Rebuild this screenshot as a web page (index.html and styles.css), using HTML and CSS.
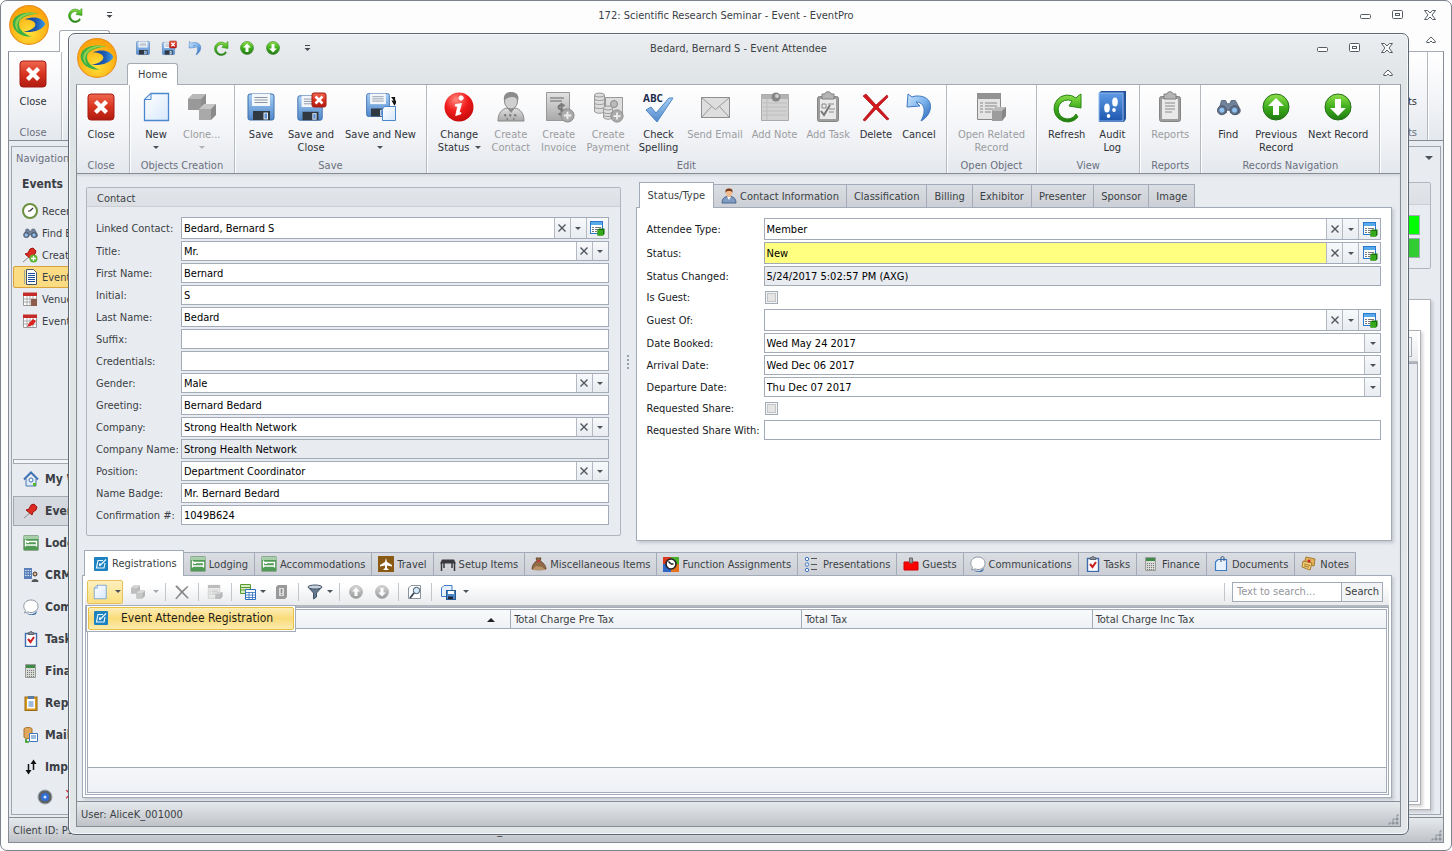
FILE: index.html
```html
<!DOCTYPE html>
<html lang="en">
<head>
<meta charset="utf-8">
<title>Bedard, Bernard S - Event Attendee</title>
<link rel="stylesheet" href="styles.css">
</head>
<body>
<svg class="defs" aria-hidden="true">
<defs>
<linearGradient id="gRed" x1="0" y1="0" x2="0" y2="1"><stop offset="0" stop-color="#f0664e"/><stop offset=".5" stop-color="#d8341f"/><stop offset="1" stop-color="#b01a10"/></linearGradient>
<linearGradient id="gBlue" x1="0" y1="0" x2="0" y2="1"><stop offset="0" stop-color="#a9d0f5"/><stop offset="1" stop-color="#4f87c9"/></linearGradient>
<linearGradient id="gUndo" x1="0" y1="0" x2="1" y2="1"><stop offset="0" stop-color="#cfe6fc"/><stop offset=".5" stop-color="#7db4ec"/><stop offset="1" stop-color="#2563b4"/></linearGradient>
<linearGradient id="gBook" x1="0" y1="0" x2="0" y2="1"><stop offset="0" stop-color="#5f9be6"/><stop offset="1" stop-color="#1d57ae"/></linearGradient>
<linearGradient id="gGreen" x1="0" y1="0" x2="0" y2="1"><stop offset="0" stop-color="#8fe04a"/><stop offset=".5" stop-color="#3fae1c"/><stop offset="1" stop-color="#1f7a12"/></linearGradient>
<linearGradient id="gPage" x1="0" y1="0" x2="1" y2="1"><stop offset="0" stop-color="#ffffff"/><stop offset="1" stop-color="#d7e8fb"/></linearGradient>
<linearGradient id="gGray" x1="0" y1="0" x2="0" y2="1"><stop offset="0" stop-color="#e2e2e2"/><stop offset="1" stop-color="#a8a8a8"/></linearGradient>
<linearGradient id="gSwoosh" x1="0" y1="0" x2="1" y2="0"><stop offset="0" stop-color="#173f8c"/><stop offset=".6" stop-color="#1f5cb4"/><stop offset="1" stop-color="#3d9be6"/></linearGradient>
<radialGradient id="gLogo" cx=".5" cy=".7" r=".6"><stop offset="0" stop-color="#ffe23a"/><stop offset="1" stop-color="#fca50c"/></radialGradient>
<radialGradient id="gInfo" cx=".4" cy=".25" r=".8"><stop offset="0" stop-color="#ff8a80"/><stop offset=".5" stop-color="#f01c1c"/><stop offset="1" stop-color="#c00808"/></radialGradient>
<symbol id="logo" viewBox="0 0 38 38"><circle cx="19" cy="19" r="18.400" fill="url(#gLogo)" stroke="#e98f1b"/><path d="M28 8C14 5 3 10 3.500 18c.5 7 8 12.500 18 12C13 27 9.500 23 9.500 18c0-6 8-9 18.500-10z" fill="#3cb043"/><path d="M10 11c-5 4-6 10 0 15-3-5-3-10 2-14 4-3 9-3.500 16-4-8-1.500-14-.5-18 3z" fill="#8fd04c"/><path d="M15 13.500c9-3.500 17-1.500 19.500 4.500-3 6-12 8.500-20.500 7.500 7-1.500 11-4 11-7s-4-4.500-10-5z" fill="url(#gSwoosh)"/></symbol>
<symbol id="close" viewBox="0 0 32 32"><rect x="3" y="3" width="26" height="26" rx="3" fill="url(#gRed)" stroke="#a41c12"/><path d="M9 12l3-3 4 4 4-4 3 3-4 4 4 4-3 3-4-4-4 4-3-3 4-4z" fill="#fff"/></symbol>
<symbol id="page" viewBox="0 0 32 32"><path d="M11 2.500H28.500V29.500H4.500V8.500z" fill="url(#gPage)" stroke="#4a87cf" stroke-width="1.300"/><path d="M4.500 8.500H11V2.500z" fill="#e6f1fd" stroke="#4a87cf"/></symbol>
<symbol id="cubes" viewBox="0 0 32 32"><path d="M2 8l5-5h13v11l-5 5H2z" fill="#8e8e8e"/><path d="M2 8l5-5h13l-5 5z" fill="#b9b9b9"/><path d="M2 8h13v11H2z" fill="#999"/><path d="M13 18l5-5h12v11l-5 5H13z" fill="#8a8a8a"/><path d="M13 18l5-5h12l-5 5z" fill="#c6c6c6"/><path d="M13 18h12v11H13z" fill="#a9a9a9"/></symbol>
<symbol id="floppy" viewBox="0 0 32 32"><rect x="3" y="3" width="26" height="26" rx="2" fill="url(#gBlue)" stroke="#3c6eab"/><path d="M7 3h18v12H7z" fill="#f4f7fa"/><path d="M9.500 6.500h13M9.500 9h13M9.500 11.500h13" stroke="#8b97a5"/><path d="M8 20h17v9H8z" fill="#303841"/><rect x="19" y="22" width="3.500" height="6" fill="#5d91d3" stroke="#dbe7f3"/></symbol>
<symbol id="floppyx" viewBox="0 0 32 32"><use href="#floppy" x="0" y="2" width="30" height="30"/><rect x="17" y="2" width="14" height="14" rx="2" fill="url(#gRed)" stroke="#a41c12"/><path d="M20.500 5.500l7 7m0-7l-7 7" stroke="#fff" stroke-width="2.600"/></symbol>
<symbol id="floppyn" viewBox="0 0 32 32"><use href="#floppy" x="0" y="0" width="28" height="28"/><path d="M20.500 15.500h11v14h-13v-11.500z" fill="url(#gPage)" stroke="#4a87cf"/><path d="M27.500 6.500h3v4M28.500 10h4l-2 3.500z" stroke="#111" stroke-width="1.200" fill="#111"/></symbol>
<symbol id="info" viewBox="0 0 32 32"><circle cx="16" cy="16" r="14.500" fill="url(#gInfo)"/><path d="M16 6.500a2.200 2.200 0 1 1 3 2.500 2.200 2.200 0 0 1-3-2.500zM12.500 13.500l6-1-2.500 9.500 2-.5-.3 1.500-5 1.500 2-9-2.500-.5z" fill="#fff" stroke="#fff" stroke-width=".8"/></symbol>
<symbol id="person" viewBox="0 0 32 32"><path d="M3 30c0-8 4-12 9-13h8c5 1 9 5 9 13z" fill="url(#gGray)" stroke="#888"/><path d="M12 17l4 5 4-5z" fill="#8b8b8b"/><ellipse cx="16" cy="10" rx="6.500" ry="8" fill="#d0d0d0" stroke="#888"/><path d="M9 10C8 3 12 1 16 1s9 2 7 9c-1-3-3-4-6-4s-6 1-8 4z" fill="#8c8c8c"/><path d="M9 24h1.500v1.500M14 24h1.500v1.500M19 24h1.500v1.500M11.500 28h1.500M18 28h1.500" stroke="#777" stroke-width="1.500" fill="none"/></symbol>
<symbol id="plusg" viewBox="0 0 16 16"><circle cx="8" cy="8" r="7" fill="#aaa" stroke="#888"/><path d="M8 4v8M4 8h8" stroke="#eee" stroke-width="2"/></symbol>
<symbol id="invoice" viewBox="0 0 32 32"><path d="M3.500 1.500h23v28h-23z" fill="url(#gGray)" stroke="#999"/><path d="M7 7h14M7 10h12" stroke="#8a8a8a" stroke-width="1.500"/><path d="M21.500 15c-2-2-6-1-6 1.500s6 2 6 4.500-4 3.500-6 1.500M18.500 12v13" stroke="#777" stroke-width="2" fill="none"/><use href="#plusg" x="17" y="17" width="15" height="15"/></symbol>
<symbol id="payment" viewBox="0 0 32 32"><rect x="13.500" y="6.500" width="17" height="15" fill="#ddd" stroke="#999"/><circle cx="22" cy="13" r="3.500" fill="#bbb" stroke="#888"/><g fill="#ddd" stroke="#999"><path d="M2.500 4v16c0 3 10 3 10 0V4z"/><path d="M2.500 8c0 2 10 2 10 0M2.500 12c0 2 10 2 10 0M2.500 16c0 2 10 2 10 0" fill="none"/><ellipse cx="7.500" cy="4" rx="5" ry="2"/><path d="M11.500 17v9c0 3 9 3 9 0v-9z"/><path d="M11.500 21c0 2 9 2 9 0M11.500 24c0 2 9 2 9 0" fill="none"/><ellipse cx="16" cy="17" rx="4.500" ry="2"/></g><use href="#plusg" x="18" y="18" width="14" height="14"/></symbol>
<symbol id="spell" viewBox="0 0 32 32"><text x="1" y="11" font-family="Open Sans" font-weight="700" font-size="10" fill="#1a2a4a">ABC</text><path d="M4 19l5-3 5 6L27 7h4L15 31z" fill="url(#gBlue)" stroke="#4d86c6"/></symbol>
<symbol id="mail" viewBox="0 0 32 32"><rect x="2.500" y="6.500" width="28" height="20" fill="#dedede" stroke="#8e8e8e"/><path d="M2.500 6.500l14 12 14-12M2.500 26.500l10-11M30.500 26.500l-10-11" fill="none" stroke="#999"/></symbol>
<symbol id="note" viewBox="0 0 32 32"><path d="M2.500 3.500h27v26h-27z" fill="#d2d2d2" stroke="#aaa"/><path d="M2.500 4h27v4h-27z" fill="#b3b3b3"/><path d="M4 12h24M4 16h24M4 20h24M4 24h24M8 8v21" stroke="#bdbdbd"/><circle cx="17" cy="6" r="4.500" fill="#858585"/><circle cx="18" cy="5" r="2" fill="#ccc"/></symbol>
<symbol id="clip" viewBox="0 0 32 32"><rect x="5.500" y="5.500" width="21" height="25" rx="2" fill="#9d9d9d" stroke="#858585"/><path d="M8 8h16v20H8z" fill="#e9e9e9"/><path d="M10 3h3c0-3 6-3 6 0h3v5H10z" fill="#b5b5b5" stroke="#808080"/></symbol>
<symbol id="report" viewBox="0 0 32 32"><use href="#clip"/><path d="M11 12h10M11 15h10M11 18h10M11 21h7" stroke="#8a8a8a"/></symbol>
<symbol id="task" viewBox="0 0 32 32"><use href="#clip"/><path d="M10 13h4v4h-4zM16 13h6M17 18h6M17 21h5" stroke="#8a8a8a" fill="none"/><path d="M9 20l3 4 6-10" stroke="#777" stroke-width="2" fill="none"/></symbol>
<symbol id="del" viewBox="0 0 32 32"><path d="M3 5l3-2 10 11L27 4l1 2-10 10 11 12-2 1-11-11L5 30l-2-1 11-13z" fill="#d3171e" stroke="#a80f14" stroke-width=".7"/></symbol>
<symbol id="undo" viewBox="0 0 32 32"><path d="M5 3L4 16l13-1-4-4c8 0 11 8 5 19 13-7 14-26-5-25-1 0-3 .500-4 1z" fill="url(#gUndo)" stroke="#3f79c2"/></symbol>
<symbol id="related" viewBox="0 0 32 32"><path d="M2.500 2.500h23v26h-23z" fill="#e4e4e4" stroke="#888"/><path d="M2 2h24v6H2z" fill="#929292"/><path d="M5 12h3M5 15h3M5 18h3M5 21h3M10 12h12M10 15h12M10 18h8M10 21h6" stroke="#888"/><path d="M17 20l4-4h10v9l-4 5H17z" fill="#868686"/><path d="M17 20l4-4h10l-4 4z" fill="#bbb"/><path d="M17 20h10v10H17z" fill="#9c9c9c"/></symbol>
<symbol id="refresh" viewBox="0 0 32 32"><path d="M25 7A13.500 13.500 0 1 0 27 26l-2-3A9.500 9.500 0 1 1 21 10l-3 5 12 2V3l-3 2z" fill="url(#gGreen)" stroke="#2c8716"/></symbol>
<symbol id="book" viewBox="0 0 32 32"><path d="M3 2l2-2h25v28l-2 3H3z" fill="#26549c"/><rect x="3" y="2" width="24" height="28" fill="url(#gBook)" stroke="#8fb7ec"/><ellipse cx="19" cy="11" rx="2.800" ry="4.500" fill="#fff"/><ellipse cx="11" cy="17" rx="2.800" ry="4.500" fill="#fff"/><ellipse cx="18" cy="19" rx="1.800" ry="2" fill="#fff"/><ellipse cx="12.500" cy="25" rx="1.800" ry="2" fill="#fff"/></symbol>
<symbol id="binoc" viewBox="0 0 32 32"><path d="M8 8h5l2 4h3l2-4h5l6 11a5 5 0 0 1-9 4h-3v-3h-5v3a6 6 0 0 1-9-4z" fill="#72829a" stroke="#4c5a70"/><circle cx="8.500" cy="20" r="5.500" fill="#64748d" stroke="#3f4c60"/><circle cx="24" cy="20" r="5.500" fill="#64748d" stroke="#3f4c60"/><circle cx="8.500" cy="20" r="3" fill="#8fc3f2"/><circle cx="24" cy="20" r="3" fill="#8fc3f2"/></symbol>
<symbol id="up" viewBox="0 0 32 32"><circle cx="16" cy="16" r="13" fill="url(#gGreen)" stroke="#27701a"/><path d="M16 7l8 8h-5v9h-6v-9H8z" fill="#fff"/></symbol>
<symbol id="down" viewBox="0 0 32 32"><circle cx="16" cy="16" r="13" fill="url(#gGreen)" stroke="#27701a"/><path d="M16 25l8-8h-5V8h-6v9H8z" fill="#fff"/></symbol>
<symbol id="min" viewBox="0 0 12 12"><rect x=".5" y="5.500" width="10" height="4" rx="1" fill="#fff" stroke="#555c64"/></symbol>
<symbol id="max" viewBox="0 0 12 12"><rect x=".5" y="1.500" width="10" height="8" rx="1" fill="#fff" stroke="#555c64"/><rect x="3.500" y="4.500" width="4" height="2" fill="#fff" stroke="#555c64"/></symbol>
<symbol id="x" viewBox="0 0 12 12"><path d="M.5 1.500h3l2.500 2.500 2.500-2.500h3L8 6l3.500 4.500h-3L6 8l-2.500 2.500h-3L4 6z" fill="#fff" stroke="#555c64"/></symbol>
<symbol id="collapse" viewBox="0 0 10 8"><path d="M.8 5L5 1l4.200 4v1.500H6.500L5 5 3.500 6.500H.8z" fill="#fff" stroke="#555c64"/></symbol>
<symbol id="more" viewBox="0 0 7 6"><path d="M1 .5h5" stroke="#444a50"/><path d="M.5 3h6l-3 3z" fill="#444a50"/></symbol>
<symbol id="clear" viewBox="0 0 10 10"><path d="M1.500 1.500l7 7m0-7l-7 7" stroke="#50565e" stroke-width="1.400"/></symbol>
<symbol id="open" viewBox="0 0 16 16"><rect x="1.500" y="1.500" width="12" height="12" fill="#fff" stroke="#2a7bd0"/><path d="M2 2h11v3H2z" fill="#58a9ea"/><path d="M3 7.500h2M3 9.500h2M3 11.500h2M6 7.500h6M6 9.500h3M6 11.500h2" stroke="#777"/><path d="M8.500 10L10 8.500h5.500V14L14 15.500H8.500z" fill="#17700b"/><path d="M8.500 10H14v5.500H8.500z" fill="#36a81c"/></symbol>
<symbol id="reg" viewBox="0 0 16 16"><rect x="1" y="1" width="14" height="14" rx="1" fill="#1d82c0"/><path d="M10 4.500H5L3.500 12H11l1-5M6.500 10L13 3.500M6.500 10l.500-3" stroke="#e9f6ff" stroke-width="1.200" fill="none"/></symbol>
<symbol id="bed" viewBox="0 0 16 16"><rect x=".5" y=".5" width="15" height="15" rx="1" fill="#4f9a55" stroke="#8fa894"/><path d="M.5 1h15v3H.5z" fill="#a7cfa9"/><path d="M2.500 4.500v7M2.500 10h11v1.500M13.500 10V6.500H2.500" stroke="#fff" stroke-width="1.300" fill="none"/><path d="M4 7.500h2" stroke="#fff"/></symbol>
<symbol id="plane" viewBox="0 0 16 16"><rect width="16" height="16" fill="#8a5a14"/><path d="M8 2l1 4 5 3v1.500L9 9.500V12l2 2H5l2-2V9.500L2 10.500V9l5-3z" fill="#fff"/></symbol>
<symbol id="table" viewBox="0 0 16 16"><path d="M2 3.500h12l2 4H0z" fill="#3a3a3e"/><path d="M1.500 7v8M14.500 7v8M4 7v5M12 7v5" stroke="#3a3a3e" stroke-width="1.500"/></symbol>
<symbol id="bag" viewBox="0 0 16 16"><path d="M6 5L5 2h5L9 5c3 1 6 5 6 8 0 1-14 1-14 0 0-3 2-7 5-8z" fill="#8f6b47" stroke="#6c4e30"/><path d="M1 14l4-4 6 1 4 3z" fill="#b99468"/><path d="M6 5h3" stroke="#c33" stroke-width="1.500"/></symbol>
<symbol id="func" viewBox="0 0 16 16"><path d="M0 1h8v7H0z" fill="#d93a1e"/><path d="M8 1h8v7H8z" fill="#4caf2a"/><path d="M0 8h8v8H0z" fill="#2c67c8"/><path d="M8 8h8v8H8z" fill="#e8721c"/><circle cx="8" cy="8" r="5" fill="#fff" stroke="#222" stroke-width="1.600"/><path d="M8 8L5.500 5.500M8 8h2.500" stroke="#222" stroke-width="1.500"/></symbol>
<symbol id="list" viewBox="0 0 16 16"><g fill="#fff" stroke="#3c76bf"><circle cx="3" cy="3" r="1.700"/><circle cx="3" cy="8.500" r="1.700"/><circle cx="3" cy="14" r="1.700"/></g><path d="M7 2.500h6M7 8.500h6M7 13.500h6" stroke="#555"/></symbol>
<symbol id="guest" viewBox="0 0 16 16"><path d="M1 6h14v8H1z" fill="#f00" stroke="#c00"/><path d="M6.500 7V2h3v5z" fill="#999" stroke="#666"/></symbol>
<symbol id="bubble" viewBox="0 0 16 16"><path d="M3 14c3 2 10 2 12-4l-2 5c-3 2-8 1-10-1z" fill="#3a6ea8"/><path d="M8 1c4 0 7 2.500 7 6.200S12 13.500 8 13.500c-1 0-2-.2-3-.6L1.500 14l1-2.700C1.200 10 .8 8.600.8 7.200.8 3.500 4 1 8 1z" fill="#fff" stroke="#8d97a3"/></symbol>
<symbol id="tasks" viewBox="0 0 16 16"><rect x="2.500" y="2.500" width="11" height="13" fill="#fff" stroke="#3e6cab" stroke-width="1.400"/><path d="M5 3.500V1.800h1.500C7 0 9 0 9.500 1.800H11v1.700z" fill="#8a9099" stroke="#5d646e"/><path d="M5 8l2.500 3L11 6" stroke="#cc1f1f" stroke-width="2" fill="none"/></symbol>
<symbol id="calc" viewBox="0 0 16 16"><path d="M2.500 1.500h10v13h-10z" fill="#d8dad6" stroke="#9a9c98"/><path d="M3 2h9v3H3z" fill="#3f8a48"/><path d="M4 7.500h8M4 9.500h8M4 11.500h8M4 13.500h8" stroke="#777" stroke-dasharray="1 1"/></symbol>
<symbol id="doc" viewBox="0 0 16 16"><path d="M5 3.500h8.500v11h-11V6z" fill="#e8f2fd" stroke="#3f7cc6" stroke-width="1.200"/><path d="M8 6V2c0-2 3-2 3 0v3" fill="none" stroke="#2d4a7a"/></symbol>
<symbol id="notes" viewBox="0 0 16 16"><path d="M5 1l9 2-1 7-10-2z" fill="#e0b45a" stroke="#a67a2c"/><path d="M2 5l9 2-2 7-8-3z" fill="#f3cf7a" stroke="#a67a2c"/><path d="M3 8l6 1.500M3 10l5 1.200" stroke="#a67a2c"/><circle cx="8" cy="5" r="1.500" fill="#c22"/></symbol>
<symbol id="contact" viewBox="0 0 16 16"><path d="M1 15c0-4 2-6 5-6.500h4c3 .5 5 2.500 5 6.500z" fill="#7f9cc4" stroke="#4d668c"/><path d="M6 8.500L8 12l2-3.500z" fill="#fff"/><ellipse cx="8" cy="5" rx="3" ry="4" fill="#f0b98e"/><path d="M4.500 5C4 1 6 .5 8 .5s4 .5 3.500 4.500C11 3.500 10 3 8 3s-3 .5-3.500 2z" fill="#7a3c14"/></symbol>
<symbol id="multi" viewBox="0 0 16 16"><path d="M.5.5h10v9H.5z" fill="#d5ecc0" stroke="#5a9a32"/><path d="M1 3.500h9M1 6h9" stroke="#5a9a32"/><path d="M5.500 5.500h10v10h-10z" fill="#fff" stroke="#2f6fc0"/><path d="M6 8.500h9M6 11h9M6 13.500h9M9 8v7M12.500 8v7" stroke="#2f6fc0" stroke-width=".8"/></symbol>
<symbol id="excel" viewBox="0 0 16 16"><path d="M2 3l2-2h9v12l-2 2H2z" fill="#999"/><path d="M5 4h5v8H5z" fill="#ddd"/><path d="M7.500 5v4M7.500 10v1" stroke="#888" stroke-width="1.500"/></symbol>
<symbol id="filter" viewBox="0 0 16 16"><path d="M1 3l5.500 6v6l3-2V9L15 3z" fill="#66788e" stroke="#445468"/><ellipse cx="8" cy="3" rx="7" ry="2" fill="#c6d1dd" stroke="#445468"/></symbol>
<symbol id="preview" viewBox="0 0 16 16"><path d="M4 1.500h9.500v13h-12V4z" fill="#fff" stroke="#8a929c"/><circle cx="9.500" cy="6.500" r="3.200" fill="#d5eafc" stroke="#456"/><path d="M7 9l-4 5" stroke="#345" stroke-width="1.800"/></symbol>
<symbol id="export" viewBox="0 0 16 16"><path d="M4 1.500h8v11H1.500V4z" fill="#e6f1fd" stroke="#3f7cc6"/><rect x="6.500" y="6.500" width="9" height="9" fill="#4a88cc" stroke="#28598f"/><path d="M8 7h6v3H8z" fill="#fff"/><path d="M8 12.500h5V15H8z" fill="#223"/></symbol>
<symbol id="clock" viewBox="0 0 16 16"><circle cx="8" cy="8" r="7" fill="#fff" stroke="#6b9140" stroke-width="2"/><path d="M8 8l3-3M8 8h-2" stroke="#333" stroke-width="1.200"/></symbol>
<symbol id="pin" viewBox="0 0 16 16"><path d="M1 15l6-5" stroke="#888"/><path d="M8 2l3-1 3 3-1 3-3 2-1 3-6-5 3-1z" fill="#dd2a22" stroke="#a01510"/></symbol>
<symbol id="pinadd" viewBox="0 0 16 16"><use href="#pin"/><circle cx="11.500" cy="11.500" r="4" fill="#5cb531"/><path d="M11.500 9v5M9 11.500h5" stroke="#fff" stroke-width="1.300"/></symbol>
<symbol id="sheet" viewBox="0 0 16 16"><path d="M4.500.5h7l3 3v12h-10z" fill="#fff" stroke="#456"/><path d="M2.500 1.500v13" stroke="#3c76bf" stroke-dasharray="1 1"/><path d="M6 4.500h7M6 6.500h7M6 8.500h7M6 10.500h7M6 12.500h7" stroke="#1f4f96"/></symbol>
<symbol id="cal" viewBox="0 0 16 16"><path d="M1.500 2.500h13v12h-13z" fill="#fff" stroke="#999"/><path d="M1 1.500h14v3.500H1z" fill="#c42a2a"/><path d="M2 8h12M2 11h12M5 5v9M8 5v9M11 5v9" stroke="#aaa"/><path d="M9 8h6v7H9z" fill="#8e5b4d"/></symbol>
<symbol id="calpin" viewBox="0 0 16 16"><path d="M1.500 2.500h13v12h-13z" fill="#fff" stroke="#999"/><path d="M1 1.500h14v3.500H1z" fill="#c42a2a"/><path d="M2 8h12M2 11h12M5 5v9M8 5v9M11 5v9" stroke="#aaa"/><path d="M5 14l2-4 4-4 3 2-3 4z" fill="#d22"/></symbol>
<symbol id="home" viewBox="0 0 16 16"><path d="M3 8v7h10V8" fill="#dce9f6" stroke="#4a7ab0"/><path d="M1 8.500L8 1.500l7 7" fill="none" stroke="#3d72b4" stroke-width="2"/><circle cx="8" cy="9" r="2" fill="#fff" stroke="#3d72b4"/><path d="M10 12h3v3h-3z" fill="#5cb531"/></symbol>
<symbol id="crm" viewBox="0 0 16 16"><path d="M1 1h8v11H1z" fill="#5c80b8"/><path d="M2 3.500h6M2 6h6M2 8.500h6" stroke="#d7e4f4" stroke-dasharray="1.500 1"/><circle cx="12" cy="7" r="2" fill="#e8b68c" stroke="#333"/><path d="M8.500 15c0-4 7-4 7 0z" fill="#555"/></symbol>
<symbol id="rep" viewBox="0 0 16 16"><rect x="2" y="2" width="12" height="13.500" fill="#d99a1e" stroke="#9b6a10"/><path d="M4 4h8v9.500H4z" fill="#fff"/><path d="M5.500 7h5M5.500 9h5M5.500 11h5" stroke="#3c76bf"/><path d="M5 1h6v3H5z" fill="#5a7ba8"/></symbol>
<symbol id="merge" viewBox="0 0 16 16"><path d="M1 2c0-2 8-2 8 0v8c0 2-8 2-8 0z" fill="#e0a85c" stroke="#a5722c"/><path d="M6.500 6.500h8v8h-8z" fill="#fff" stroke="#3c76bf"/><path d="M8 9h5M8 11h5" stroke="#3c76bf"/><path d="M3 12v3h3" stroke="#2a9a20" stroke-width="1.600" fill="none"/></symbol>
<symbol id="impexp" viewBox="0 0 16 16"><path d="M5.500 5v8M10.500 3v8" stroke="#111" stroke-width="1.500"/><path d="M2.500 11h6l-3 4.500zM7.500 5h6l-3-4.500z" fill="#111"/></symbol>
<symbol id="lens" viewBox="0 0 16 16"><circle cx="8" cy="8" r="7" fill="#5c6068" stroke="#9aa"/><circle cx="8" cy="8" r="4" fill="#2f6fd6"/><circle cx="8" cy="8" r="1.500" fill="#cfe4ff"/></symbol>
</defs>
</svg>

<div class="desktop">
<section class="window back" aria-label="Event window">
  <header class="head">
    <svg class="logo"><use href="#logo"/></svg>
    <div class="titlebar">
      <div class="qat"><button aria-label="Refresh"><svg class="i16"><use href="#refresh"/></svg></button><button class="morebtn" aria-label="Customize"><svg class="more"><use href="#more"/></svg></button></div>
      <span class="title">172: Scientific Research Seminar - Event - EventPro</span>
      <div class="winbtns"><button aria-label="Minimize"><svg><use href="#min"/></svg></button><button aria-label="Maximize"><svg><use href="#max"/></svg></button><button aria-label="Close window"><svg><use href="#x"/></svg></button></div>
    </div>
    <div class="tabrow"><button class="rtab">Home</button><button class="collapse" aria-label="Collapse ribbon"><svg><use href="#collapse"/></svg></button></div>
  </header>
  <div class="ribbon">
    <div class="group"><div class="btns"><button class="big"><svg><use href="#close"/></svg><span>Close</span></button></div><div class="cap">Close</div></div>
    <div class="group push"><div class="btns"><button class="big"><svg><use href="#report"/></svg><span>Reports</span></button></div><div class="cap">Reports</div></div>
    <div class="rest"></div>
  </div>
  <div class="client backclient">
    <div class="backpanel">
      <div class="caption"><span>Navigation</span><i class="caret"></i></div>
      <div class="backcols">
        <nav class="nav">
          <h2>Events</h2>
          <a href="#"><svg class="i16"><use href="#clock"/></svg>Recent</a>
          <a href="#"><svg class="i16"><use href="#binoc"/></svg>Find E</a>
          <a href="#"><svg class="i16"><use href="#pinadd"/></svg>Create</a>
          <a href="#" class="sel"><svg class="i16"><use href="#sheet"/></svg>Events</a>
          <a href="#"><svg class="i16"><use href="#cal"/></svg>Venue</a>
          <a href="#"><svg class="i16"><use href="#calpin"/></svg>Event</a>
          <div class="navsplit"></div>
          <div class="modules">
            <button><svg class="i16"><use href="#home"/></svg>My W</button>
            <button class="sel"><svg class="i16"><use href="#pin"/></svg>Events</button>
            <button><svg class="i16"><use href="#bed"/></svg>Lodging</button>
            <button><svg class="i16"><use href="#crm"/></svg>CRM</button>
            <button><svg class="i16"><use href="#bubble"/></svg>Com</button>
            <button><svg class="i16"><use href="#tasks"/></svg>Tasks</button>
            <button><svg class="i16"><use href="#calc"/></svg>Finance</button>
            <button><svg class="i16"><use href="#rep"/></svg>Reports</button>
            <button><svg class="i16"><use href="#merge"/></svg>Mail</button>
            <button><svg class="i16"><use href="#impexp"/></svg>Imp</button>
          </div>
          <div class="navfoot"><svg class="i16"><use href="#lens"/></svg><svg class="mark"><use href="#del"/></svg></div>
        </nav>
        <div class="backmain">
          <div class="box backbox"><div class="boxcap"></div><div class="bar lime"></div><div class="bar green"></div></div>
          <div class="backpage"><div class="backinner"><div class="backtools"><div class="backfield"></div></div><div class="backgrid"></div></div></div>
        </div>
      </div>
    </div>
  </div>
  <footer class="status"><span>Client ID: PS</span><span class="user">User: AliceK_001000</span><i class="grip"></i></footer>
</section>

<section class="window front" aria-label="Event attendee window">
  <header class="head">
    <svg class="logo"><use href="#logo"/></svg>
    <div class="titlebar">
      <div class="qat">
        <button aria-label="Save"><svg class="i16"><use href="#floppy"/></svg></button>
        <button aria-label="Save and close"><svg class="i16"><use href="#floppyx"/></svg></button>
        <button aria-label="Undo"><svg class="i16"><use href="#undo"/></svg></button>
        <button aria-label="Refresh"><svg class="i16"><use href="#refresh"/></svg></button>
        <button aria-label="Previous"><svg class="i16"><use href="#up"/></svg></button>
        <button aria-label="Next"><svg class="i16"><use href="#down"/></svg></button>
        <button class="morebtn" aria-label="Customize"><svg class="more"><use href="#more"/></svg></button>
      </div>
      <span class="title">Bedard, Bernard S - Event Attendee</span>
      <div class="winbtns"><button aria-label="Minimize"><svg><use href="#min"/></svg></button><button aria-label="Maximize"><svg><use href="#max"/></svg></button><button aria-label="Close window"><svg><use href="#x"/></svg></button></div>
    </div>
    <div class="tabrow"><button class="rtab">Home</button><button class="collapse" aria-label="Collapse ribbon"><svg><use href="#collapse"/></svg></button></div>
  </header>

  <div class="ribbon">
    <div class="group"><div class="btns"><button class="big"><svg><use href="#close"/></svg><span>Close</span></button></div><div class="cap">Close</div></div>
    <div class="group create"><div class="btns">
      <button class="big"><svg><use href="#page"/></svg><span>New</span><i class="caret"></i></button>
      <button class="big" disabled><svg><use href="#cubes"/></svg><span>Clone...</span><i class="caret"></i></button></div><div class="cap">Objects Creation</div></div>
    <div class="group"><div class="btns">
      <button class="big"><svg><use href="#floppy"/></svg><span>Save</span></button>
      <button class="big"><svg><use href="#floppyx"/></svg><span>Save and<br>Close</span></button>
      <button class="big"><svg><use href="#floppyn"/></svg><span>Save and New</span><i class="caret"></i></button></div><div class="cap">Save</div></div>
    <div class="group"><div class="btns">
      <button class="big"><svg><use href="#info"/></svg><span>Change<br>Status <i class="caret"></i></span></button>
      <button class="big" disabled><svg><use href="#person"/></svg><span>Create<br>Contact</span></button>
      <button class="big" disabled><svg><use href="#invoice"/></svg><span>Create<br>Invoice</span></button>
      <button class="big" disabled><svg><use href="#payment"/></svg><span>Create<br>Payment</span></button>
      <button class="big"><svg><use href="#spell"/></svg><span>Check<br>Spelling</span></button>
      <button class="big" disabled><svg><use href="#mail"/></svg><span>Send Email</span></button>
      <button class="big" disabled><svg><use href="#note"/></svg><span>Add Note</span></button>
      <button class="big" disabled><svg><use href="#task"/></svg><span>Add Task</span></button>
      <button class="big"><svg><use href="#del"/></svg><span>Delete</span></button>
      <button class="big"><svg><use href="#undo"/></svg><span>Cancel</span></button></div><div class="cap">Edit</div></div>
    <div class="group"><div class="btns"><button class="big" disabled><svg><use href="#related"/></svg><span>Open Related<br>Record</span></button></div><div class="cap">Open Object</div></div>
    <div class="group"><div class="btns">
      <button class="big"><svg><use href="#refresh"/></svg><span>Refresh</span></button>
      <button class="big"><svg><use href="#book"/></svg><span>Audit<br>Log</span></button></div><div class="cap">View</div></div>
    <div class="group"><div class="btns"><button class="big" disabled><svg><use href="#report"/></svg><span>Reports</span></button></div><div class="cap">Reports</div></div>
    <div class="group"><div class="btns">
      <button class="big"><svg class="sm"><use href="#binoc"/></svg><span>Find</span></button>
      <button class="big"><svg><use href="#up"/></svg><span>Previous<br>Record</span></button>
      <button class="big"><svg><use href="#down"/></svg><span>Next Record</span></button></div><div class="cap">Records Navigation</div></div>
    <div class="rest"></div>
  </div>

  <main class="client">
    <div class="upper">
      <section class="box contact">
        <h2 class="boxcap">Contact</h2>
        <div class="form">
          <label for="c1">Linked Contact:</label><div class="field tall"><select id="c1"><option>Bedard, Bernard S</option></select><button aria-label="Clear"><svg><use href="#clear"/></svg></button><button aria-label="Open list"><i class="caret"></i></button><button class="wide" aria-label="Open record"><svg><use href="#open"/></svg></button></div>
          <label for="c2">Title:</label><div class="field"><select id="c2"><option>Mr.</option></select><button aria-label="Clear"><svg><use href="#clear"/></svg></button><button aria-label="Open list"><i class="caret"></i></button></div>
          <label for="c3">First Name:</label><div class="field"><input id="c3" value="Bernard"></div>
          <label for="c4">Initial:</label><div class="field"><input id="c4" value="S"></div>
          <label for="c5">Last Name:</label><div class="field"><input id="c5" value="Bedard"></div>
          <label for="c6">Suffix:</label><div class="field"><input id="c6"></div>
          <label for="c7">Credentials:</label><div class="field"><input id="c7"></div>
          <label for="c8">Gender:</label><div class="field"><select id="c8"><option>Male</option></select><button aria-label="Clear"><svg><use href="#clear"/></svg></button><button aria-label="Open list"><i class="caret"></i></button></div>
          <label for="c9">Greeting:</label><div class="field"><input id="c9" value="Bernard Bedard"></div>
          <label for="c10">Company:</label><div class="field"><select id="c10"><option>Strong Health Network</option></select><button aria-label="Clear"><svg><use href="#clear"/></svg></button><button aria-label="Open list"><i class="caret"></i></button></div>
          <label for="c11">Company Name:</label><div class="field ro"><input id="c11" value="Strong Health Network" readonly></div>
          <label for="c12">Position:</label><div class="field"><select id="c12"><option>Department Coordinator</option></select><button aria-label="Clear"><svg><use href="#clear"/></svg></button><button aria-label="Open list"><i class="caret"></i></button></div>
          <label for="c13">Name Badge:</label><div class="field"><input id="c13" value="Mr. Bernard Bedard"></div>
          <label for="c14">Confirmation #:</label><div class="field"><input id="c14" value="1049B624"></div>
        </div>
      </section>
      <div class="splitter"><i></i><i></i><i></i><i></i></div>
      <section class="tabbed">
        <div class="tabs" role="tablist">
          <button class="tab on" role="tab">Status/Type</button>
          <button class="tab" role="tab"><svg class="i16"><use href="#contact"/></svg>Contact Information</button>
          <button class="tab" role="tab">Classification</button>
          <button class="tab" role="tab">Billing</button>
          <button class="tab" role="tab">Exhibitor</button>
          <button class="tab" role="tab">Presenter</button>
          <button class="tab" role="tab">Sponsor</button>
          <button class="tab" role="tab">Image</button>
        </div>
        <div class="page statuspage">
          <div class="form dark">
            <label for="s1">Attendee Type:</label><div class="field tall"><select id="s1"><option>Member</option></select><button aria-label="Clear"><svg><use href="#clear"/></svg></button><button aria-label="Open list"><i class="caret"></i></button><button class="wide" aria-label="Open record"><svg><use href="#open"/></svg></button></div>
            <label for="s2">Status:</label><div class="field tall yellow"><select id="s2"><option>New</option></select><button aria-label="Clear"><svg><use href="#clear"/></svg></button><button aria-label="Open list"><i class="caret"></i></button><button class="wide" aria-label="Open record"><svg><use href="#open"/></svg></button></div>
            <label for="s3">Status Changed:</label><div class="field ro"><input id="s3" value="5/24/2017 5:02:57 PM (AXG)" readonly></div>
            <label for="s4">Is Guest:</label><div class="checkrow"><input type="checkbox" id="s4"></div>
            <label for="s5">Guest Of:</label><div class="field tall"><select id="s5"><option></option></select><button aria-label="Clear"><svg><use href="#clear"/></svg></button><button aria-label="Open list"><i class="caret"></i></button><button class="wide" aria-label="Open record"><svg><use href="#open"/></svg></button></div>
            <label for="s6">Date Booked:</label><div class="field"><input id="s6" value="Wed May 24 2017"><button aria-label="Open calendar"><i class="caret"></i></button></div>
            <label for="s7">Arrival Date:</label><div class="field"><input id="s7" value="Wed Dec 06 2017"><button aria-label="Open calendar"><i class="caret"></i></button></div>
            <label for="s8">Departure Date:</label><div class="field"><input id="s8" value="Thu Dec 07 2017"><button aria-label="Open calendar"><i class="caret"></i></button></div>
            <label for="s9">Requested Share:</label><div class="checkrow"><input type="checkbox" id="s9"></div>
            <label for="s10">Requested Share With:</label><div class="field"><input id="s10"></div>
          </div>
        </div>
      </section>
    </div>

    <section class="tabbed lower">
      <div class="tabs" role="tablist">
        <button class="tab on" role="tab"><svg class="i16"><use href="#reg"/></svg>Registrations</button>
        <button class="tab" role="tab"><svg class="i16"><use href="#bed"/></svg>Lodging</button>
        <button class="tab" role="tab"><svg class="i16"><use href="#bed"/></svg>Accommodations</button>
        <button class="tab" role="tab"><svg class="i16"><use href="#plane"/></svg>Travel</button>
        <button class="tab" role="tab"><svg class="i16"><use href="#table"/></svg>Setup Items</button>
        <button class="tab" role="tab"><svg class="i16"><use href="#bag"/></svg>Miscellaneous Items</button>
        <button class="tab" role="tab"><svg class="i16"><use href="#func"/></svg>Function Assignments</button>
        <button class="tab" role="tab"><svg class="i16"><use href="#list"/></svg>Presentations</button>
        <button class="tab" role="tab"><svg class="i16"><use href="#guest"/></svg>Guests</button>
        <button class="tab" role="tab"><svg class="i16"><use href="#bubble"/></svg>Communications</button>
        <button class="tab" role="tab"><svg class="i16"><use href="#tasks"/></svg>Tasks</button>
        <button class="tab" role="tab"><svg class="i16"><use href="#calc"/></svg>Finance</button>
        <button class="tab" role="tab"><svg class="i16"><use href="#doc"/></svg>Documents</button>
        <button class="tab" role="tab"><svg class="i16"><use href="#notes"/></svg>Notes</button>
      </div>
      <div class="page gridpage">
        <div class="toolbar">
          <div class="newwrap">
            <button class="tool drop hot" aria-label="New"><svg class="i16"><use href="#page"/></svg><i class="caret"></i></button>
            <div class="menu"><button><svg class="i16"><use href="#reg"/></svg>Event Attendee Registration</button></div>
          </div>
          <button class="tool drop far" aria-label="Clone" disabled><svg class="i16 dim"><use href="#cubes"/></svg><i class="caret"></i></button>
          <i class="sep"></i>
          <button class="tool" aria-label="Delete" disabled><svg class="i16 dim"><use href="#del"/></svg></button>
          <i class="sep"></i>
          <button class="tool" aria-label="Open related" disabled><svg class="i16 dim"><use href="#related"/></svg></button>
          <i class="sep"></i>
          <button class="tool drop" aria-label="Views"><svg class="i16"><use href="#multi"/></svg><i class="caret"></i></button>
          <button class="tool" aria-label="Edit model" disabled><svg class="i16"><use href="#excel"/></svg></button>
          <i class="sep"></i>
          <button class="tool drop" aria-label="Filter"><svg class="i16"><use href="#filter"/></svg><i class="caret"></i></button>
          <i class="sep"></i>
          <button class="tool" aria-label="Up" disabled><svg class="i16 dim"><use href="#up"/></svg></button>
          <button class="tool" aria-label="Down" disabled><svg class="i16 dim"><use href="#down"/></svg></button>
          <i class="sep"></i>
          <button class="tool" aria-label="Preview"><svg class="i16"><use href="#preview"/></svg></button>
          <i class="sep"></i>
          <button class="tool drop far" aria-label="Export"><svg class="i16"><use href="#export"/></svg><i class="caret"></i></button>
          <div class="search"><i class="sep"></i><input type="text" aria-label="Search text" placeholder="Text to search..."><button>Search</button></div>
        </div>
        <div class="grid">
          <table>
            <colgroup><col class="c-first"><col class="c-mid"><col class="c-mid"><col></colgroup>
            <thead><tr><th><i class="asc"></i></th><th>Total Charge Pre Tax</th><th>Total Tax</th><th>Total Charge Inc Tax</th></tr></thead>
          </table>
          <div class="gridbody"></div>
          <div class="gridfoot"></div>
        </div>
      </div>
    </section>
  </main>
  <footer class="status"><span>User: AliceK_001000</span><i class="grip"></i></footer>
</section>
</div>
</body>
</html>
```
FILE: styles.css
```css
* { box-sizing: border-box; }
body {
  margin: 0;
  font: 11px/13px "DejaVu Sans Condensed", "DejaVu Sans", sans-serif;
  color: #3b3f45;
  background: #fff;
}
button, input, select {
  font: inherit;
  color: inherit;
  border: 0;
  margin: 0;
  padding: 0;
  background: none;
  border-radius: 0;
}
svg { display: block; flex: none; }
.defs { position: absolute; width: 0; height: 0; }
.i16 { width: 16px; height: 16px; }
.caret {
  display: inline-block;
  width: 0;
  height: 0;
  border: 3px solid transparent;
  border-top-color: #4c5259;
  border-bottom: 0;
}
.dim { filter: grayscale(1); opacity: .6; }

/* windows */
.desktop { position: relative; height: 100vh; overflow: hidden; }
.window {
  position: absolute;
  isolation: isolate;
  display: flex;
  flex-direction: column;
  border: 1px solid #7d848c;
  padding: 0 7px 7px;
  border-radius: 7px;
}
.back { inset: 0; background: #fdfdfe; }
.front {
  inset: 33px 43px 16px 68px;
  border-color: #5f6973;
  background: linear-gradient(#ebedf0, #dfe4e7 50px, #e2e6e9);
  box-shadow: inset 0 0 0 1px #f6f7f9;
}
.head { display: grid; grid-template-columns: 51px 1fr; }
.logo { grid-area: 1 / 1 / 3 / 2; width: 40px; height: 40px; margin: 4px 0 0 1px; z-index: 1; }
.titlebar {
  grid-area: 1 / 1 / 2 / 3;
  display: grid;
  grid-template-columns: 1fr auto 1fr;
  align-items: center;
  height: 28px;
}
.qat { display: flex; align-items: center; gap: 10px; padding-left: 59px; }
.morebtn { padding-left: 13px; }
.more { width: 7px; height: 6px; }
.winbtns { display: flex; justify-content: flex-end; gap: 20px; padding-right: 8px; }
.winbtns svg { width: 12px; height: 12px; }
.tabrow { grid-area: 2 / 2 / 3 / 3; display: flex; justify-content: space-between; align-items: flex-end; height: 22px; }
.rtab {
  height: 22px;
  padding: 0 10px;
  background: #fff;
  border: 1px solid #a5abb2;
  border-bottom: 0;
  border-radius: 3px 3px 0 0;
  margin-bottom: -1px;
  z-index: 1;
}
.collapse { padding: 0 8px 7px 0; }
.collapse svg { width: 10px; height: 8px; }

/* ribbon */
.ribbon {
  display: flex;
  background: linear-gradient(#fff, #f4f5f8 50%, #e4e8ed);
  border: 1px solid #858c95;
  border-top-color: #a5abb2;
}
.group {
  display: flex;
  flex-direction: column;
  justify-content: space-between;
  padding: 6px 5px 1px;
  border-right: 1px solid #b4b9c0;
  box-shadow: 1px 0 #fff;
}
.group:first-child { padding-left: 3px; padding-right: 7px; }
.group:nth-child(n+4) { padding-left: 6px; padding-right: 6px; }
.group.create { min-width: 105px; }
.group.push { margin-left: auto; }
.rest { width: 23px; flex: none; }
.push + .rest { width: 15px; }
.btns { display: flex; gap: 1px; }
.big {
  display: flex;
  flex-direction: column;
  align-items: center;
  min-width: 42px;
  height: 63px;
  padding: 0 5px;
  white-space: nowrap;
  text-align: center;
  color: #2e3238;
}
.big:nth-child(n+4) { padding: 0 4px; }
.big svg { width: 32px; height: 32px; margin-bottom: 5px; }
.big svg.sm { padding: 3px; }
.big > .caret { margin-top: 5px; }
.big span .caret { margin: 0 0 2px 2px; }
.big:disabled { color: #9b9da1; }
.big:disabled .caret { border-top-color: #b0b2b5; }
.cap { margin-top: 5px; text-align: center; color: #6a7080; }

/* shared panels */
.client {
  flex: 1;
  min-height: 0;
  background: #e8ebf0;
  border: 1px solid #858c95;
  border-width: 0 1px;
}
.front .client { display: flex; flex-direction: column; gap: 9px; padding: 8px 8px 3px 5px; box-shadow: inset 0 2px 2px #d6dade; }
.status {
  display: flex;
  align-items: center;
  height: 26px;
  padding: 0 4px;
  border: 1px solid #858c95;
  background: linear-gradient(#e6e9ec, #bfc3c8);
}
.grip {
  align-self: flex-end;
  width: 12px;
  height: 12px;
  margin: 0 -3px 1px auto;
  background: radial-gradient(circle, #8e949b 1px, transparent 2px) 0 0 / 4px 4px;
  clip-path: polygon(100% 0, 100% 100%, 0 100%);
}
.box { border: 1px solid #b0b5be; border-radius: 2px; }
.boxcap {
  margin: 0;
  height: 19px;
  padding: 4px 10px 0;
  font: inherit;
  background: linear-gradient(#e2e5e9, #dcdfe4);
  border-bottom: 1px solid #ccd0d6;
}
.upper { display: grid; grid-template-columns: minmax(0, 535fr) 15px minmax(0, 757fr); margin-left: 4px; }
.contact { margin: 5px 0; }
.form { display: grid; grid-template-columns: 85px minmax(0, 1fr); gap: 2px 0; align-items: center; white-space: nowrap; }
.contact .form { padding: 10px 11px 10px 9px; }
.dark { color: #16191d; grid-template-columns: 117px minmax(0, 1fr); }
.field { display: flex; height: 20px; border: 1px solid #a3abb8; background: #fff; color: #000; }
.field.tall { height: 22px; }
.field.yellow { background: #ffff80; }
.field.ro { background: #e8ebf0; }
.field input, .field select { flex: 1; min-width: 0; padding: 0 2px; appearance: none; outline: 0; }
.field button {
  width: 16px;
  display: grid;
  place-items: center;
  border-left: 1px solid #b2b9c3;
  background: linear-gradient(#f7f9fb, #e9ecf0);
}
.field button.wide { width: 22px; }
.field button svg { width: 10px; height: 10px; }
.field button.wide svg { width: 16px; height: 16px; }
.checkrow { height: 19px; display: flex; align-items: center; padding-left: 1px; }
.checkrow input {
  appearance: none;
  width: 13px;
  height: 13px;
  margin: 0;
  border: 1px solid #a3abb8;
  background: #e4e4e4;
  box-shadow: inset 0 0 0 1px #f4f4f4, inset 0 0 0 2px #c4c4c6;
}
.splitter { display: flex; flex-direction: column; justify-content: center; align-items: center; gap: 2px; }
.splitter i { width: 2px; height: 2px; background: #98a0ac; }

/* tabs */
.tabbed { display: flex; flex-direction: column; min-width: 0; }
.tabs { display: flex; align-items: flex-end; padding-left: 3px; height: 25px; white-space: nowrap; }
.tab {
  display: flex;
  align-items: center;
  gap: 3px;
  height: 23px;
  padding: 0 7px;
  border: 1px solid #a3abb8;
  border-width: 1px 1px 0 0;
  background: linear-gradient(#dadde2, #ccd0d6);
}
.tab.on {
  height: 26px;
  padding: 0 8px;
  margin-bottom: -1px;
  border-left-width: 1px;
  background: #fff;
  z-index: 1;
}
.page { flex: 1; min-height: 0; background: #fff; border: 1px solid #a3abb8; box-shadow: 2px 2px 3px #c3c8cf; }
.statuspage { padding: 10px 10px 10px 10px; }
.lower { flex: 1; min-height: 0; }
.lower .tabs { padding-left: 2px; }
.lower .tab { padding: 0 6px; }
.lower .tab.on { padding-left: 8px; }

/* registrations list */
.gridpage { display: flex; flex-direction: column; padding: 0 2px 2px; }
.toolbar {
  display: flex;
  align-items: center;
  height: 31px;
  padding: 2px 6px 0 2px;
  background: linear-gradient(#fff 30%, #e8eaed);
  border-bottom: 2px solid #b3b8bf;
}
.tool { display: flex; align-items: center; height: 24px; padding: 0 5px; }
.tool.drop { gap: 4px; padding-right: 3px; }
.tool.far { gap: 7px; }
.tool:disabled .caret { border-top-color: #a5a8ac; }
.tool.hot {
  gap: 7px;
  padding: 0 1px 0 4px;
  margin-right: 2px;
  border: 1px solid #e5c15a;
  border-radius: 2px;
  background: linear-gradient(#fdf0bf, #fbdf7f);
}
.sep { width: 1px; height: 18px; margin: 0 3px; background: #c3c7cc; }
.search { display: flex; align-items: center; margin-left: auto; height: 20px; }
.search .sep { margin-right: 7px; }
.search input { width: 110px; height: 20px; padding: 0 4px; border: 1px solid #a3abb8; background: #fff; }
.search input::placeholder { color: #93969b; }
.search button { height: 20px; padding: 0 3px; border: 1px solid #a3abb8; border-left: 0; background: #f2f4f6; }
.newwrap { position: relative; }
.menu {
  position: absolute;
  left: -1px;
  top: 25px;
  z-index: 5;
  padding: 1px;
  border: 1px solid #a3abb8;
  background: #fff;
}
.menu button {
  display: flex;
  align-items: center;
  gap: 12px;
  width: 206px;
  height: 23px;
  padding-left: 4px;
  white-space: nowrap;
  font-size: 12px;
  color: #1d1d1d;
  border: 1px solid #e8bf45;
  border-radius: 2px;
  background: linear-gradient(#fdeeb8, #f9db79 50%, #fdebb0);
}
.grid { flex: 1; min-height: 0; display: flex; flex-direction: column; border: 3px double #a3abb8; }
.grid table { width: 100%; table-layout: fixed; border-spacing: 0; }
.c-first { width: 32.6%; }
.c-mid { width: 22.4%; }
.grid th {
  height: 19px;
  padding: 0 3px;
  font-weight: normal;
  text-align: left;
  background: linear-gradient(#f8fafb, #eef1f5);
  border: 1px solid #a3abb8;
  border-width: 0 1px 1px 0;
}
.grid th:first-child { text-align: right; }
.grid th:last-child { border-right: 0; }
.asc { display: inline-block; vertical-align: middle; border: 4px solid transparent; border-bottom-color: #222; border-top: 0; margin-right: 12px; }
.gridbody { flex: 1; background: #fff; }
.gridfoot { height: 25px; background: linear-gradient(#f5f6fa, #eef1f5); border-top: 1px solid #a3abb8; }

/* window behind */
.backclient { display: flex; padding: 5px 2px 2px; }
.backpanel { flex: 1; min-width: 0; display: flex; flex-direction: column; border: 1px solid #9fa5ad; }
.caption { display: flex; justify-content: space-between; align-items: center; height: 22px; padding: 0 7px 0 4px; color: #6a7080; }
.caption .caret { border-width: 4px 4px 0; }
.backcols { flex: 1; min-height: 0; display: flex; justify-content: space-between; }
.nav { width: 200px; display: flex; flex-direction: column; padding: 0 1px; }
.nav h2 { margin: 8px 0 8px 9px; font-size: 12px; line-height: 15px; }
.nav a { display: flex; align-items: center; gap: 4px; height: 22px; padding-left: 8px; color: inherit; text-decoration: none; border: 1px solid transparent; flex: none; }
.nav a.sel { background: #fbdc82; border-color: #d9a13b; border-radius: 2px; }
.navsplit { height: 5px; margin-top: auto; border: 1px solid #a3a9b1; background: #f4f6f8; flex: none; }
.modules { display: flex; flex-direction: column; gap: 2px; }
.modules button { display: flex; align-items: center; gap: 6px; height: 30px; padding-left: 9px; font-size: 12px; font-weight: bold; border: 1px solid transparent; }
.modules .sel { background: #d5d9df; border-color: #a3a9b1; }
.navfoot { display: flex; gap: 12px; padding: 7px 0 9px 24px; }
.mark { width: 10px; height: 10px; }
.backmain { width: 60px; display: flex; flex-direction: column; gap: 30px; padding: 13px 9px 4px 0; }
.backbox { display: flex; flex-direction: column; gap: 3px; padding-bottom: 10px; }
.backbox .boxcap { height: 22px; margin-bottom: 7px; }
.bar { height: 20px; border: 1px solid #a3abb8; margin-right: 10px; }
.lime { background: #00ff00; }
.green { background: #32cd32; }
.backpage { flex: 1; padding: 30px 9px 4px 0; background: #fff; border: 1px solid #b0b2b8; box-shadow: 2px 2px 3px #c3c8cf; display: flex; }
.backinner { flex: 1; display: flex; flex-direction: column; padding: 0 2px 2px 0; border: 1px solid #b0b2b8; box-shadow: 2px 2px 3px #d3d3d3; }
.backtools { height: 32px; padding: 6px 6px 0 0; background: linear-gradient(#fff, #e8eaed); border-bottom: 2px solid #b3b8bf; }
.backfield { height: 20px; border: 1px solid #a3abb8; }
.backgrid { flex: 1; background: #e8ebf0; border: 1px solid #a3abb8; }
.user { margin-left: 364px; }
```
